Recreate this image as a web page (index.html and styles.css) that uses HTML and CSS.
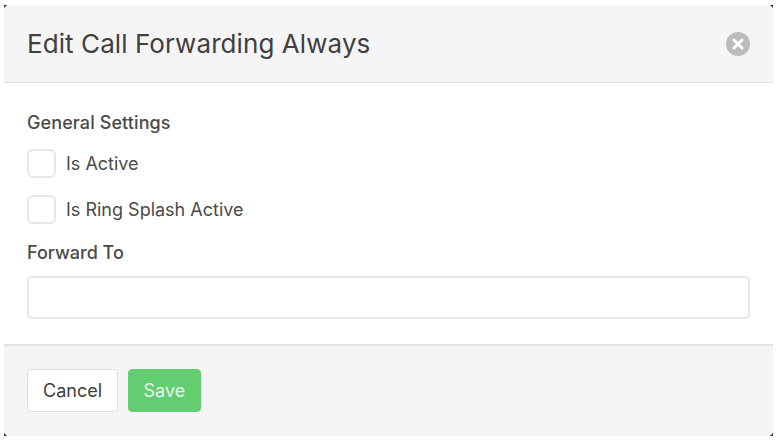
FILE: index.html
```html
<!DOCTYPE html>
<html lang="en">
<head>
  <meta charset="UTF-8">
  <meta name="viewport" content="width=device-width, initial-scale=1.0">
  <title>Edit Call Forwarding Always</title>
  <link rel="stylesheet" href="styles.css">
</head>
<body>

  <section class="modal">
    <span class="corner corner--tl"></span>
    <span class="corner corner--tr"></span>
    <span class="corner corner--bl"></span>
    <span class="corner corner--br"></span>

    <header class="modal-head">
      <h1>Edit Call Forwarding Always</h1>
      <button class="close" aria-label="Close">
        <svg viewBox="0 0 24 24" width="24" height="24">
          <circle cx="12" cy="12" r="12" fill="#bcbcbc"/>
          <path d="M8 8l8 8M16 8l-8 8" stroke="#fff" stroke-width="3" stroke-linecap="round"/>
        </svg>
      </button>
    </header>

    <form class="modal-body">
      <h2 class="label">General Settings</h2>
      <label class="check"><input type="checkbox"><span>Is Active</span></label>
      <label class="check"><input type="checkbox"><span>Is Ring Splash Active</span></label>
      <h2 class="label label--forward">Forward To</h2>
      <input class="field" type="text">
    </form>

    <footer class="modal-foot">
      <button class="btn">Cancel</button>
      <button class="btn btn--save">Save</button>
    </footer>
  </section>

</body>
</html>
```

FILE: styles.css
```css
* {
  box-sizing: border-box;
  margin: 0;
  padding: 0;
}
html {
  background: #fff;
}
body {
  padding: 5px 6px 7px 4px;
  font-family: Inter, "Liberation Sans", sans-serif;
  color: #4a4a4a;
}

.modal {
  position: relative;
  display: flex;
  flex-direction: column;
  height: 431px;
}

/* dark overlay peeking out behind the rounded corners */
.corner {
  position: absolute;
  width: 3px;
  height: 3px;
  background: #333;
}
.corner--tl { top: 0; left: 0; clip-path: polygon(0 0, 100% 0, 0 100%); }
.corner--tr { top: 0; right: 0; clip-path: polygon(0 0, 100% 0, 100% 100%); }
.corner--bl { bottom: 0; left: 0; clip-path: polygon(0 0, 100% 100%, 0 100%); }
.corner--br { bottom: 0; right: 0; clip-path: polygon(100% 0, 100% 100%, 0 100%); }

.modal-head {
  display: flex;
  align-items: center;
  justify-content: space-between;
  height: 78px;
  padding: 0 23px;
  background: #f5f5f5;
  border-bottom: 1px solid #dedede;
}
.modal-head h1 {
  font-size: 26px;
  font-weight: 400;
  letter-spacing: .08px;
  color: #404040;
}
.close {
  display: flex;
  border: 0;
  background: none;
}

.modal-body {
  flex: 1;
  padding: 30px 23px 0;
}
.label {
  font-size: 18px;
  font-weight: 500;
  line-height: 20px;
  letter-spacing: .1px;
}
.check {
  display: flex;
  align-items: center;
  gap: 10px;
  margin-top: 16px;
  margin-bottom: 17px;
  font-size: 18px;
}
.check + .check {
  margin-top: 0;
  margin-bottom: 0;
}
.check input {
  appearance: none;
  width: 29px;
  height: 29px;
  background: #fff;
  border: 2px solid #e6e6e6;
  border-radius: 6px;
}
.label--forward {
  margin-top: 19px;
  letter-spacing: 0;
}
.field {
  display: block;
  width: 100%;
  height: 43px;
  margin-top: 13px;
  background: #fff;
  border: 2px solid #e6e6e6;
  border-radius: 5px;
}

.modal-foot {
  display: flex;
  align-items: center;
  gap: 10px;
  height: 92px;
  padding: 0 23px 2px;
  background: #f5f5f5;
  border-top: 2px solid #e2e2e2;
}
.btn {
  height: 43px;
  padding: 0 15px;
  font: inherit;
  font-size: 18px;
  color: #404040;
  background: #fff;
  border: 1px solid #e0e0e0;
  border-radius: 4px;
}
.btn--save {
  padding: 0 14.5px;
  color: #e6f7e9;
  background: #62cd71;
  border-color: #62cd71;
}
```
